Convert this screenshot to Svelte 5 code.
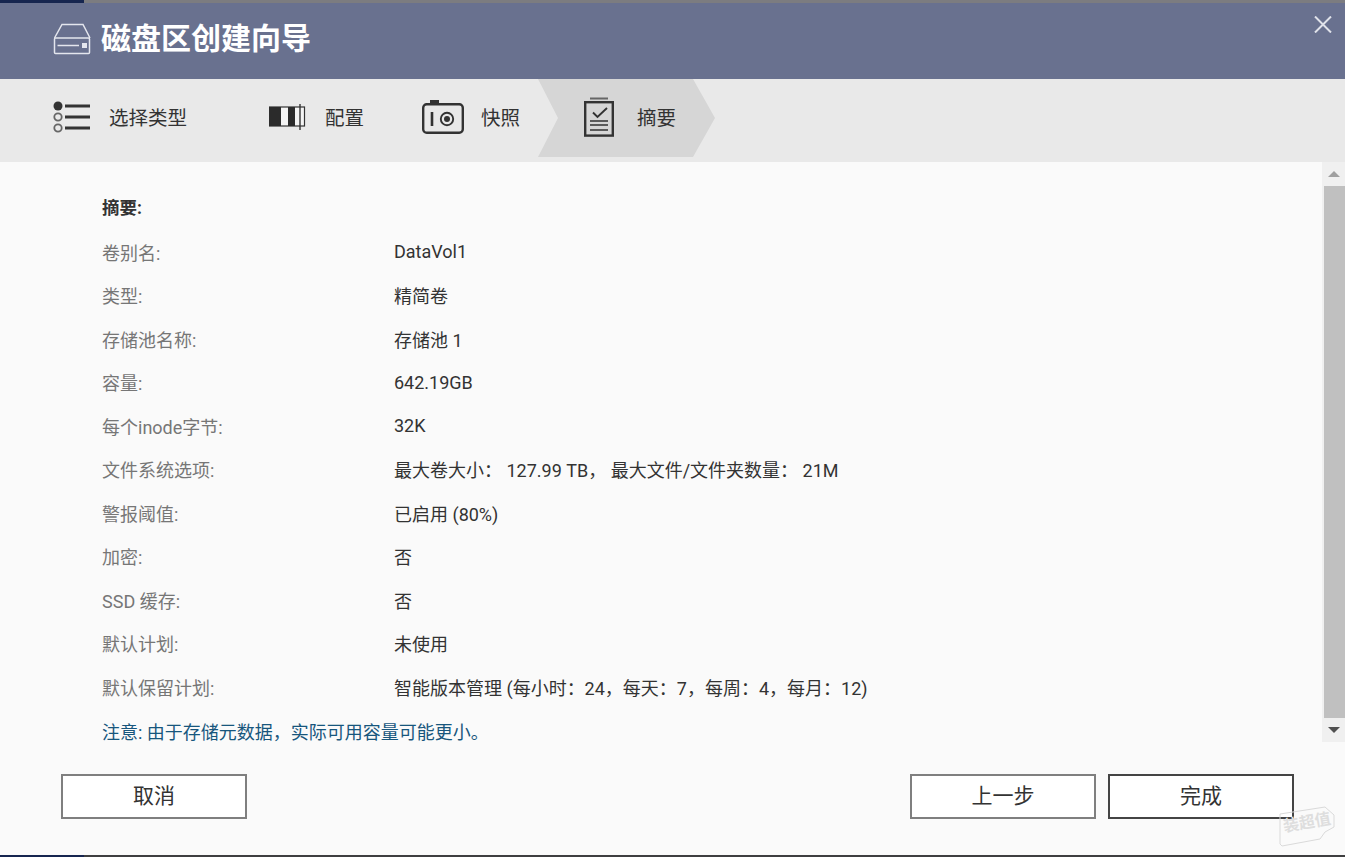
<script>
  const rows = [
    ['卷别名:', 'DataVol1'],
    ['类型:', '精简卷'],
    ['存储池名称:', '存储池 1'],
    ['容量:', '642.19GB'],
    ['每个inode字节:', '32K'],
    ['文件系统选项:', '最大卷大小： 127.99 TB， 最大文件/文件夹数量： 21M'],
    ['警报阈值:', '已启用 (80%)'],
    ['加密:', '否'],
    ['SSD 缓存:', '否'],
    ['默认计划:', '未使用'],
    ['默认保留计划:', '智能版本管理 (每小时：24，每天：7，每周：4，每月：12)']
  ];
</script>

<div class="dialog">
  <div class="topline"><span class="navy"></span></div>

  <header class="title">
    <svg class="disk" width="38" height="32" viewBox="0 0 38 32" fill="none" stroke="#e4e6ee" stroke-width="1.5">
      <path d="M1.5 15 L9 1.5 H30 L37 15" />
      <rect x="1.5" y="15" width="35" height="15.5" rx="1" />
      <path d="M4.5 22.5 H26" />
      <rect x="29" y="20" width="5" height="5" fill="#e4e6ee" stroke="none" />
    </svg>
    <h1>磁盘区创建向导</h1>
    <svg class="close" width="18" height="17" viewBox="0 0 18 17" stroke="#e0e2ea" stroke-width="2">
      <path d="M1 0.5 L17 16.5 M17 0.5 L1 16.5" />
    </svg>
  </header>

  <nav class="steps">
    <div class="step first">
      <svg width="38" height="32" viewBox="0 0 38 32" fill="none" stroke="#333">
        <circle cx="5" cy="5" r="4.5" fill="#333" stroke="none" />
        <circle cx="5" cy="16" r="3.7" stroke-width="1.8" stroke="#666" />
        <circle cx="5" cy="27" r="3.7" stroke-width="1.8" stroke="#666" />
        <path d="M12 5 H37 M12 16 H37 M12 27 H37" stroke-width="3" />
      </svg>
      <span>选择类型</span>
    </div>
    <div class="step second">
      <svg width="38" height="26" viewBox="0 0 38 26" fill="none">
        <rect x="0.5" y="3" width="35" height="19" fill="#f4f4f4" stroke="#333" stroke-width="1.2" />
        <rect x="0.5" y="3" width="11.5" height="19" fill="#2b2b2b" />
        <rect x="19" y="3" width="7" height="19" fill="#2b2b2b" />
        <path d="M31 0 V26" stroke="#333" stroke-width="1.4" />
      </svg>
      <span>配置</span>
    </div>
    <div class="step third">
      <svg width="44" height="34" viewBox="0 0 44 34" fill="none" stroke="#333">
        <rect x="8" y="0" width="9" height="5" fill="#333" stroke="none" />
        <rect x="1.2" y="4.2" width="39.6" height="28.6" rx="3.5" stroke-width="2.4" />
        <path d="M10 12 V26" stroke-width="2.6" />
        <circle cx="25" cy="19" r="6.2" stroke-width="1.9" />
        <circle cx="25" cy="19" r="3" fill="#333" stroke="none" />
      </svg>
      <span>快照</span>
    </div>
    <div class="step active">
      <svg width="32" height="40" viewBox="0 0 32 40" fill="none" stroke="#333">
        <path d="M6 1.5 H24" stroke-width="1.8" stroke="#666" />
        <rect x="1.2" y="5.2" width="27.6" height="33.4" stroke-width="2.4" />
        <path d="M9 15.5 L13.5 20 L23 11" stroke-width="1.9" />
        <path d="M6 24 H24 M6 28 H24 M6 33 H24" stroke-width="1.6" />
      </svg>
      <span>摘要</span>
    </div>
  </nav>

  <main class="body">
    <div class="content">
      <h2>摘要:</h2>
      {#each rows as row}
        <div class="row">
          <div class="label">{row[0]}</div>
          <div class="value">{row[1]}</div>
        </div>
      {/each}
      <p class="note">注意: 由于存储元数据，实际可用容量可能更小。</p>
    </div>
    <div class="scrollbar">
      <div class="arrow"><i class="up"></i></div>
      <div class="thumb"></div>
      <div class="arrow"><i class="down"></i></div>
    </div>
  </main>

  <footer class="actions">
    <button class="cancel">取消</button>
    <div class="right">
      <button class="prev">上一步</button>
      <button class="finish">完成</button>
    </div>
  </footer>

  <div class="bottomline"><span class="navy"></span></div>

  <div class="watermark">
    <svg width="56" height="41" viewBox="0 0 56 41" fill="none" stroke="#dadada" stroke-width="1">
      <path d="M1 8 L46 1 L55 9 V21 L46 26 L41 33 L3 40 L1 38 Z" />
    </svg>
    <span>装超值</span>
  </div>
</div>

<style>
  :global(body) {
    margin: 0;
    background: #fafafa;
  }
  .dialog {
    position: relative;
    width: 1345px;
    height: 857px;
    display: flex;
    flex-direction: column;
    overflow: hidden;
    background: #fafafa;
    font-family: Roboto, "Noto Sans CJK SC", sans-serif;
    font-size: 18px;
    color: #333;
  }
  .topline {
    height: 3px;
    background: #7c7c80;
  }
  .bottomline {
    height: 2px;
    background: #3e3e40;
  }
  .navy {
    display: block;
    width: 84px;
    height: 100%;
    background: #16254f;
  }
  .title {
    height: 76px;
    box-sizing: border-box;
    padding: 0 0 5px 53px;
    display: flex;
    align-items: center;
    background: #69718f;
    position: relative;
  }
  h1 {
    margin: 0 0 0 10px;
    font-size: 30px;
    font-weight: 700;
    color: #fff;
    line-height: 1;
  }
  .close {
    position: absolute;
    right: 13px;
    top: 13px;
  }
  .steps {
    height: 83px;
    display: flex;
    background: #e9e9e9;
    flex: none;
  }
  .step {
    display: flex;
    align-items: center;
    flex: none;
    box-sizing: border-box;
    height: 78px;
    padding-bottom: 2px;
    font-size: 19.5px;
  }
  .step span {
    margin-bottom: 2px;
  }
  .first {
    width: 269px;
    padding-left: 53px;
  }
  .first span {
    margin-left: 18px;
  }
  .second {
    width: 153px;
  }
  .second span {
    margin-left: 18px;
  }
  .third {
    width: 116px;
  }
  .third span {
    margin-left: 15px;
  }
  .active {
    width: 177px;
    padding-left: 46px;
    background: #d6d6d6;
    clip-path: polygon(0 0, 155px 0, 177px 50%, 155px 100%, 0 100%, 20px 50%);
  }
  .active span {
    margin-left: 21px;
  }
  .body {
    flex: 1;
    display: flex;
    min-height: 0;
  }
  .content {
    flex: 1;
    padding: 35px 0 0 102px;
  }
  h2 {
    margin: 0 0 11px;
    font-size: 17.5px;
    font-weight: 700;
    line-height: 22px;
    color: #333;
  }
  .row {
    display: grid;
    grid-template-columns: 292px 1fr;
    height: 43.5px;
    align-items: center;
  }
  .label {
    color: #767676;
  }
  .value {
    color: #333;
  }
  .note {
    margin: 11px 0 0;
    color: #17567d;
    line-height: 26px;
  }
  .scrollbar {
    width: 23px;
    display: flex;
    flex-direction: column;
    background: #f0f0f0;
    height: 580px;
  }
  .arrow {
    height: 24px;
    display: flex;
    align-items: center;
    justify-content: center;
    flex: none;
  }
  .arrow i {
    display: block;
    width: 0;
    height: 0;
    border-left: 6px solid transparent;
    border-right: 6px solid transparent;
  }
  .up {
    border-bottom: 6px solid #a0a0a0;
  }
  .down {
    border-top: 6px solid #505050;
  }
  .thumb {
    flex: 1;
    background: #c0c0c0;
    margin-left: 2px;
  }
  .actions {
    display: flex;
    justify-content: space-between;
    padding: 0 51px 36px 61px;
  }
  .right {
    display: flex;
    gap: 12px;
  }
  button {
    width: 186px;
    height: 45px;
    box-sizing: border-box;
    padding: 0 0 5px;
    background: #fff;
    font-family: inherit;
    font-size: 21px;
    color: #333;
  }
  .cancel, .prev {
    border: 2px solid #7f7f7f;
  }
  .finish {
    border: 2px solid #444;
  }
  .watermark {
    position: absolute;
    left: 1279px;
    top: 806px;
    width: 56px;
    height: 41px;
  }
  .watermark span {
    position: absolute;
    left: 4px;
    top: 6px;
    font-size: 16px;
    line-height: 22px;
    font-weight: 700;
    white-space: nowrap;
    color: #dedede;
    transform: rotate(-10deg);
  }
</style>
